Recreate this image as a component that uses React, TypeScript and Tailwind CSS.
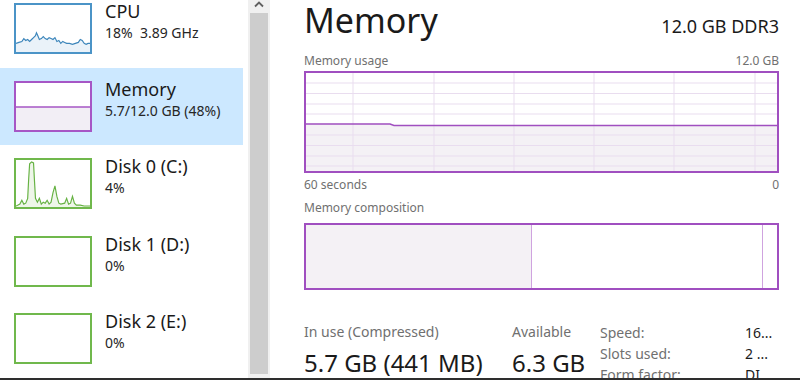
import React from "react";

const CPU_PTS =
  "0,40 3,39 6,38 8,35 10,37 12,36 14,38 16,36 18,34 20,32 21,29 22,31 24,36 26,35 28,33 30,35 32,36 34,34 36,35 38,36 40,34 42,38 44,37 46,40 48,38 50,39 52,40 55,40 58,41 61,40 64,39 66,36 68,37 70,40 72,41 74,40 76,40";
const DISK_PTS =
  "0,48 4,46 6,42 8,46 10,45 12,40 13,20 14,4 16,2 18,3 19,22 20,40 22,44 24,40 26,46 28,44 30,45 32,42 34,46 36,44 38,34 40,27 42,38 44,45 46,46 50,45 52,40 54,46 56,45 58,38 60,45 62,47 66,47 70,48 76,48";

function Thumb({
  kind,
}: {
  kind: "cpu" | "mem" | "disk0" | "disk";
}) {
  const border =
    kind === "cpu"
      ? "border-[#4b94c7]"
      : kind === "mem"
      ? "border-[#a656c5]"
      : "border-[#70b84c]";
  return (
    <div className={`w-[78px] h-[51px] border-2 ${border} bg-white shrink-0 overflow-hidden`}>
      <svg width="74" height="47" viewBox="0 0 76 49" preserveAspectRatio="none" className="block w-full h-full">
        {kind === "cpu" && (
          <>
            <polygon points={`${CPU_PTS} 76,49 0,49`} fill="#eaf2f9" />
            <polyline points={CPU_PTS} fill="none" stroke="#3d86bb" strokeWidth="1.2" />
          </>
        )}
        {kind === "mem" && (
          <>
            <rect x="0" y="25" width="76" height="24" fill="#f2eef5" />
            <line x1="0" y1="25" x2="76" y2="25" stroke="#a656c5" strokeWidth="1.5" />
          </>
        )}
        {kind === "disk0" && (
          <>
            <polygon points={`${DISK_PTS} 76,49 0,49`} fill="#eef6e9" />
            <polyline points={DISK_PTS} fill="none" stroke="#66b243" strokeWidth="1.2" />
          </>
        )}
      </svg>
    </div>
  );
}

function Item({
  kind,
  title,
  sub,
  selected,
  h,
}: {
  kind: "cpu" | "mem" | "disk0" | "disk";
  title: string;
  sub: string;
  selected?: boolean;
  h: string;
}) {
  return (
    <div className={`${h} shrink-0 flex pl-[14px] ${selected ? "bg-[#cce8ff]" : ""}`}>
      <div className="pt-[13px]">
        <Thumb kind={kind} />
      </div>
      <div className="pl-[13px] pt-[9px] text-[#1a1a1a]">
        <div className="text-[18px] leading-[24px] whitespace-nowrap">{title}</div>
        <div className="text-[14px] leading-[18px] mt-[1px] whitespace-pre text-[#262626]">{sub}</div>
      </div>
    </div>
  );
}

function UsageGraph() {
  const vx = [47, 128, 208, 288, 368, 449];
  const hy = [10, 20.5, 31, 41, 62, 72.5, 83, 93];
  return (
    <div className="h-[102px] border-2 border-[#a04fc0] bg-white">
      <svg width="100%" height="100%" viewBox="0 0 471 98" preserveAspectRatio="none" className="block">
        <polygon points="0,50.5 85,50.5 87,52 471,52 471,98 0,98" fill="#f4f1f5" />
        {vx.map((x) => (
          <line key={x} x1={x} y1="0" x2={x} y2="98" stroke="#e9ddef" strokeWidth="1" />
        ))}
        {hy.map((y) => (
          <line key={y} x1="0" y1={y} x2="471" y2={y} stroke="#e9ddef" strokeWidth="1" />
        ))}
        <polyline points="0,51 84,51 88,52.5 471,52.5" fill="none" stroke="#a04fc0" strokeWidth="1.5" />
      </svg>
    </div>
  );
}

function CompositionBar() {
  return (
    <div className="h-[67px] border-2 border-[#a04fc0] bg-white flex">
      <div className="w-[226px] bg-[#f4f1f5] border-r border-[#cfa3df]" />
      <div className="flex-1 border-r border-[#cfa3df]" />
      <div className="w-[14px]" />
    </div>
  );
}

export default function App() {
  return (
    <div className="w-[800px] h-[380px] bg-white flex flex-col overflow-hidden font-['Noto_Sans',sans-serif]">
      <div className="flex flex-1 min-h-0 overflow-hidden">
        {/* left list */}
        <div className="w-[243px] shrink-0 flex flex-col mt-[-10px]">
          <Item kind="cpu" title="CPU" sub="18%  3.89 GHz" h="h-[78px]" />
          <Item kind="mem" title="Memory" sub="5.7/12.0 GB (48%)" selected h="h-[77px]" />
          <Item kind="disk0" title="Disk 0 (C:)" sub="4%" h="h-[78px]" />
          <Item kind="disk" title="Disk 1 (D:)" sub="0%" h="h-[77px]" />
          <Item kind="disk" title="Disk 2 (E:)" sub="0%" h="h-[78px]" />
        </div>
        {/* scrollbar */}
        <div className="ml-[5px] w-[22px] shrink-0 bg-[#f0f0f0] flex flex-col items-center pb-[4px]">
          <div className="h-[13px] w-full flex items-start justify-center">
            <svg width="10" height="8" viewBox="0 0 10 8" className="block">
              <polyline points="1,6.5 5,2.5 9,6.5" fill="none" stroke="#606060" strokeWidth="1.8" />
            </svg>
          </div>
          <div className="flex-1 w-[18px] bg-[#cdcdcd]" />
        </div>
        {/* right panel */}
        <div className="flex-1 min-w-0 pl-[34px] pr-[21px] text-[#1a1a1a]">
          <div className="flex items-baseline justify-between mt-[-3px]">
            <div className="text-[34px] leading-[46px]">Memory</div>
            <div className="text-[18px] leading-[24px]">12.0 GB DDR3</div>
          </div>
          <div className="mt-[10px] flex justify-between text-[12px] leading-[16px] text-[#707070]">
            <span>Memory usage</span>
            <span>12.0 GB</span>
          </div>
          <div className="mt-[2px]">
            <UsageGraph />
          </div>
          <div className="mt-[4px] flex justify-between text-[12px] leading-[16px] text-[#707070]">
            <span>60 seconds</span>
            <span>0</span>
          </div>
          <div className="mt-[7px] text-[12px] leading-[16px] text-[#707070]">Memory composition</div>
          <div className="mt-[7px]">
            <CompositionBar />
          </div>
          <div className="mt-[32px] flex">
            <div className="w-[208px] shrink-0">
              <div className="text-[14px] leading-[20px] text-[#707070] whitespace-nowrap">In use (Compressed)</div>
              <div className="mt-[5px] text-[24px] leading-[32px] whitespace-nowrap">5.7 GB (441 MB)</div>
            </div>
            <div className="w-[88px] shrink-0">
              <div className="text-[14px] leading-[20px] text-[#707070]">Available</div>
              <div className="mt-[5px] text-[24px] leading-[32px] whitespace-nowrap">6.3 GB</div>
            </div>
            <div className="flex-1 grid grid-cols-[145px_1fr] text-[14px] leading-[21px]">
              <span className="text-[#707070]">Speed:</span>
              <span>16...</span>
              <span className="text-[#707070]">Slots used:</span>
              <span>2 ...</span>
              <span className="text-[#707070]">Form factor:</span>
              <span>DI...</span>
            </div>
          </div>
        </div>
      </div>
      <div className="h-[2px] shrink-0 bg-[#2e2e2e]" />
    </div>
  );
}
